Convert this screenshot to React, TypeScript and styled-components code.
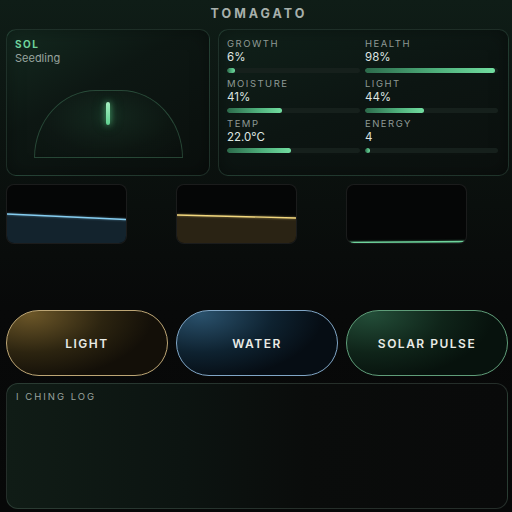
import React from "react";
import styled, { createGlobalStyle } from "styled-components";

const Global = createGlobalStyle`
  html, body { margin: 0; padding: 0; }
  body {
    width: 512px;
    height: 512px;
    overflow: hidden;
    background: linear-gradient(180deg, #0f1d17 0%, #0b120f 30%, #080909 60%, #070808 100%);
    font-family: Inter, "Noto Sans", sans-serif;
  }
`;

const Page = styled.div`
  width: 512px;
  height: 512px;
  box-sizing: border-box;
  padding: 0 3px 0 6px;
  display: flex;
  flex-direction: column;
`;

const Title = styled.h1`
  margin: 0;
  height: 29px;
  line-height: 28px;
  text-align: center;
  font-size: 12.5px;
  font-weight: 700;
  letter-spacing: 3px;
  color: #a7b0ac;
  padding-left: 3px;
`;

const TopRow = styled.div`
  display: grid;
  grid-template-columns: 204px 1fr;
  gap: 8px;
  height: 147px;
`;

const Card = styled.section`
  box-sizing: border-box;
  border-radius: 10px;
  border: 1px solid rgba(130, 200, 165, 0.16);
  background: linear-gradient(150deg, #142a20 0%, #0d1713 40%, #0a0f0d 100%);
  box-shadow: inset 0 0 18px rgba(0, 0, 0, 0.35);
`;

const PlantCard = styled(Card)`
  display: flex;
  flex-direction: column;
  padding: 8px 8px 0 8px;
`;

const PlantName = styled.div`
  font-size: 10px;
  font-weight: 700;
  letter-spacing: 1.5px;
  color: #6fd39c;
  line-height: 13px;
`;

const PlantStage = styled.div`
  font-size: 11px;
  color: #97a49e;
  line-height: 14px;
`;

const Dome = styled.div`
  margin-top: auto;
  margin-bottom: 17px;
  align-self: center;
  width: 149px;
  height: 68px;
  box-sizing: border-box;
  border: 1px solid rgba(110, 200, 150, 0.28);
  border-radius: 62px 62px 0 0 / 68px 68px 0 0;
  background: radial-gradient(ellipse at 50% 40%, rgba(60, 140, 95, 0.16) 0%, rgba(20, 40, 30, 0.15) 60%, rgba(8, 14, 11, 0.2) 100%);
  display: flex;
  justify-content: center;
  padding-top: 11px;
`;

const Sprout = styled.div`
  width: 4px;
  height: 23px;
  border-radius: 2px;
  background: linear-gradient(180deg, #a6f0c2, #5fd08f);
  box-shadow: 0 0 6px rgba(100, 230, 150, 0.7), 0 0 14px rgba(80, 200, 130, 0.35);
`;

const StatsCard = styled(Card)`
  background: linear-gradient(160deg, #10211a 0%, #0c1512 50%, #0b100e 100%);
  display: grid;
  grid-template-columns: 133px 133px;
  column-gap: 5px;
  align-content: start;
  padding: 8px 0 0 8px;
`;

const Stat = styled.div`
  height: 40px;
  display: flex;
  flex-direction: column;
`;

const StatLabel = styled.div`
  font-size: 9.5px;
  letter-spacing: 1.5px;
  color: #8e9a95;
  line-height: 12px;
`;

const StatValue = styled.div`
  font-size: 11.5px;
  color: #dfe6e2;
  line-height: 14px;
`;

const Track = styled.div`
  margin-top: 4px;
  height: 5px;
  border-radius: 3px;
  background: #16201c;
  overflow: hidden;
`;

const Fill = styled.div`
  height: 100%;
  border-radius: 3px;
  background: linear-gradient(90deg, #2c6a4b 0%, #4fb07c 55%, #72dda0 100%);
`;

const PanelRow = styled.div`
  margin-top: 8px;
  display: grid;
  grid-template-columns: repeat(3, 1fr);
  gap: 8px;
  padding-right: 1px;
`;

const Panel = styled.div`
  width: 121px;
  height: 60px;
  box-sizing: border-box;
  border-radius: 8px;
  border: 1px solid rgba(255, 255, 255, 0.09);
  background: #050606;
  overflow: hidden;
  display: flex;
  svg { display: block; }
`;

const Buttons = styled.div`
  margin-top: 66px;
  display: grid;
  grid-template-columns: repeat(3, 1fr);
  gap: 8px;
  padding-right: 1px;
`;

const ActionButton = styled.button<{ $border: string; $glow: string; $mid: string; $base: string }>`
  height: 66px;
  border-radius: 33px;
  border: 1.5px solid ${(p) => p.$border};
  background: radial-gradient(ellipse 90% 120% at 15% 5%, ${(p) => p.$glow} 0%, ${(p) => p.$mid} 50%, ${(p) => p.$base} 85%);
  color: #e9ebe6;
  font-family: Inter, "Noto Sans", sans-serif;
  font-size: 12px;
  font-weight: 600;
  letter-spacing: 1.5px;
  cursor: pointer;
  padding: 0;
`;

const Log = styled.section`
  margin-top: 7px;
  height: 126px;
  box-sizing: border-box;
  border-radius: 12px;
  border: 1px solid rgba(150, 190, 170, 0.2);
  background: linear-gradient(90deg, #101c16 0%, #0c1411 35%, #0a0c0b 60%, #090a0a 100%);
  padding: 7px 9px;
  margin-right: 1px;
`;

const LogTitle = styled.div`
  font-size: 9.5px;
  letter-spacing: 2px;
  color: #98a39e;
  line-height: 12px;
`;

const stats = [
  { label: "GROWTH", value: "6%", pct: 6 },
  { label: "HEALTH", value: "98%", pct: 98 },
  { label: "MOISTURE", value: "41%", pct: 41 },
  { label: "LIGHT", value: "44%", pct: 44 },
  { label: "TEMP", value: "22.0°C", pct: 48 },
  { label: "ENERGY", value: "4", pct: 4 },
];

const levels = [
  { y1: 29, y2: 34.5, stroke: "#86cdf0", fill: "#13232d" },
  { y1: 30, y2: 33, stroke: "#f2d77e", fill: "#2a2314" },
  { y1: 57.5, y2: 56.5, stroke: "#6fd39c", fill: "#0f2a1c" },
];

const Level = ({ y1, y2, stroke, fill }: { y1: number; y2: number; stroke: string; fill: string }) => (
  <svg width="119" height="58" viewBox="0 0 119 58" preserveAspectRatio="none">
    <polygon points={`0,${y1} 119,${y2} 119,58 0,58`} fill={fill} />
    <line x1="0" y1={y1} x2="119" y2={y2} stroke={stroke} strokeWidth="1.6" opacity="0.5" style={{ filter: "blur(1px)" }} />
    <line x1="0" y1={y1} x2="119" y2={y2} stroke={stroke} strokeWidth="1.3" />
  </svg>
);

export default function App() {
  return (
    <>
      <Global />
      <Page>
        <Title>TOMAGATO</Title>
        <TopRow>
          <PlantCard>
            <PlantName>SOL</PlantName>
            <PlantStage>Seedling</PlantStage>
            <Dome>
              <Sprout />
            </Dome>
          </PlantCard>
          <StatsCard>
            {stats.map((s) => (
              <Stat key={s.label}>
                <StatLabel>{s.label}</StatLabel>
                <StatValue>{s.value}</StatValue>
                <Track>
                  <Fill style={{ width: `${Math.max(s.pct, 4)}%` }} />
                </Track>
              </Stat>
            ))}
          </StatsCard>
        </TopRow>
        <PanelRow>
          {levels.map((l, i) => (
            <Panel key={i}>
              <Level {...l} />
            </Panel>
          ))}
        </PanelRow>
        <Buttons>
          <ActionButton $border="#bda675" $glow="#6b5628" $mid="#2c2410" $base="#130f08">LIGHT</ActionButton>
          <ActionButton $border="#80a6c6" $glow="#2a516c" $mid="#0e2230" $base="#060d14">WATER</ActionButton>
          <ActionButton $border="#5f9d79" $glow="#234d38" $mid="#0f2419" $base="#07120d">SOLAR PULSE</ActionButton>
        </Buttons>
        <Log>
          <LogTitle>I CHING LOG</LogTitle>
        </Log>
      </Page>
    </>
  );
}
